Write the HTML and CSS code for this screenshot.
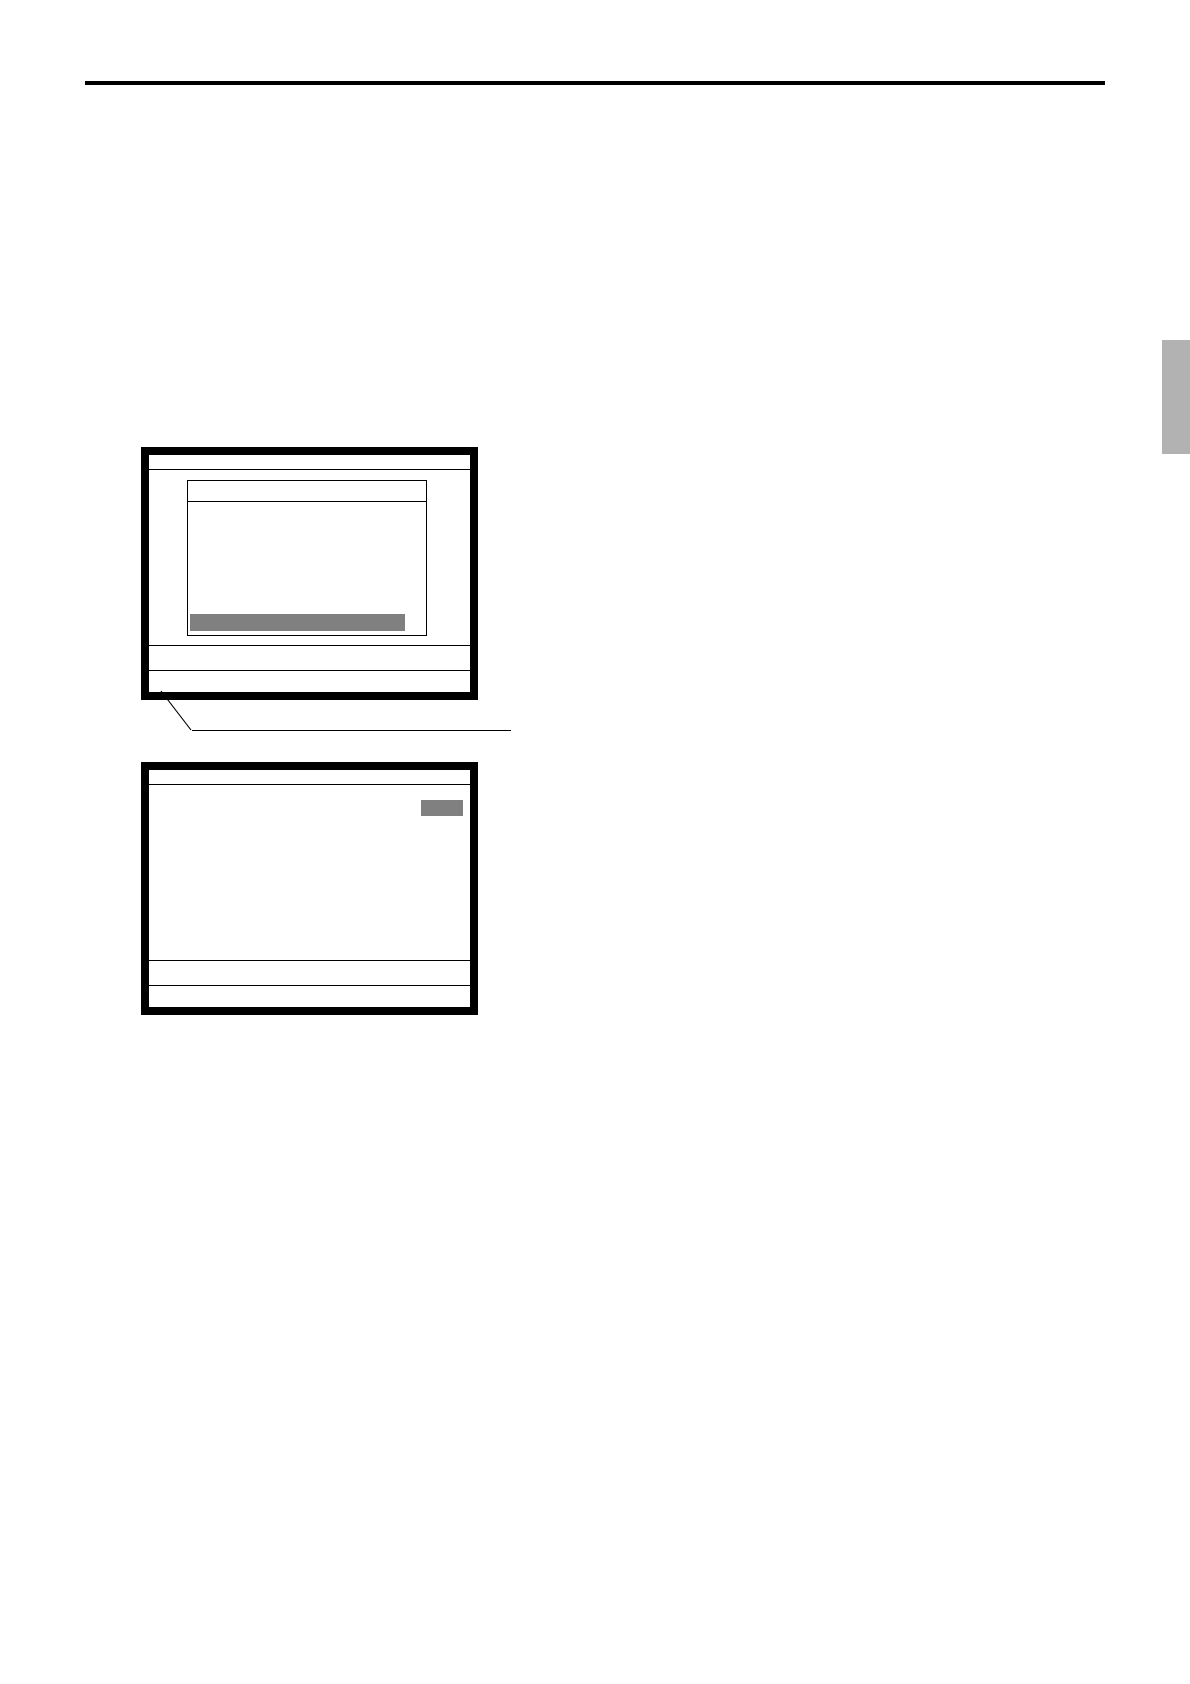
FILE: index.html
```html
<!DOCTYPE html>
<html lang="en">
<head>
    <meta charset="UTF-8">
    <meta name="viewport" content="width=device-width, initial-scale=1.0">
    <title>Manual</title>
    <link rel="stylesheet" href="styles.css">
</head>
<body>

    <main class="content">
        <hr class="top-rule">

        <!-- Menu screen -->
        <section class="screen">
            <div class="screen-title"></div>
            <div class="screen-body">
                <div class="menu">
                    <div class="menu-title"></div>
                    <div class="menu-list">
                        <div class="menu-selected"></div>
                    </div>
                </div>
            </div>
            <div class="screen-message"></div>
            <div class="screen-keys"></div>
        </section>

        <!-- Leader line from the bottom row of the screen -->
        <svg class="leader" width="351" height="42" viewBox="0 0 351 42" aria-hidden="true">
            <path d="M1 1 L31 40" fill="none" stroke="#000" stroke-width="1.2"/>
            <path d="M32 40.5 H351" fill="none" stroke="#000"/>
        </svg>

        <!-- Settings screen -->
        <section class="screen">
            <div class="screen-title"></div>
            <div class="screen-body settings">
                <div class="value-selected"></div>
            </div>
            <div class="screen-message"></div>
            <div class="screen-keys"></div>
        </section>
    </main>

    <!-- Chapter tab -->
    <aside class="chapter-tab"></aside>

</body>
</html>
```

FILE: styles.css
```css
* {
    margin: 0;
    padding: 0;
    box-sizing: border-box;
}

body {
    font-family: "Liberation Sans", Arial, sans-serif;
    background-color: #fff;
    color: #000;
    display: grid;
    grid-template-columns: minmax(0, 1fr) 85px;
    min-height: 100vh;
    padding-left: 85px;
}

.content {
    padding-top: 81px;
}

.top-rule {
    border: none;
    height: 4px;
    background-color: #000;
    margin-bottom: 362px;
}

/* Terminal screens */
.screen {
    display: flex;
    flex-direction: column;
    width: 100%;
    max-width: 337px;
    min-height: 253px;
    margin-left: 56px;
    border: 8px solid #000;
}

.screen-title {
    height: 15px;
    border-bottom: 1px solid #000;
}

.screen-body {
    flex: 1;
    display: flex;
    padding: 10px 43px 9px 38px;
}

.screen-message {
    height: 25px;
    border-top: 1px solid #000;
}

.screen-keys {
    height: 22px;
    border-top: 1px solid #000;
}

/* Menu window */
.menu {
    flex: 1;
    display: flex;
    flex-direction: column;
    border: 1px solid #000;
}

.menu-title {
    height: 21px;
    border-bottom: 1px solid #000;
}

.menu-list {
    flex: 1;
    display: flex;
    align-items: flex-end;
    padding: 0 21px 4px 2px;
}

.menu-selected {
    flex: 1;
    height: 17px;
    background-color: #808080;
}

/* Settings list */
.settings {
    justify-content: flex-end;
    padding: 15px 7px;
}

.value-selected {
    width: 42px;
    height: 16px;
    background-color: #808080;
}

/* The leader starts inside the screen border above it */
.leader {
    display: block;
    position: relative;
    margin: -10px 0 30px 75px;
}

.chapter-tab {
    justify-self: end;
    width: 28px;
    height: 114px;
    margin-top: 340px;
    background-color: #b2b2b2;
}
```
